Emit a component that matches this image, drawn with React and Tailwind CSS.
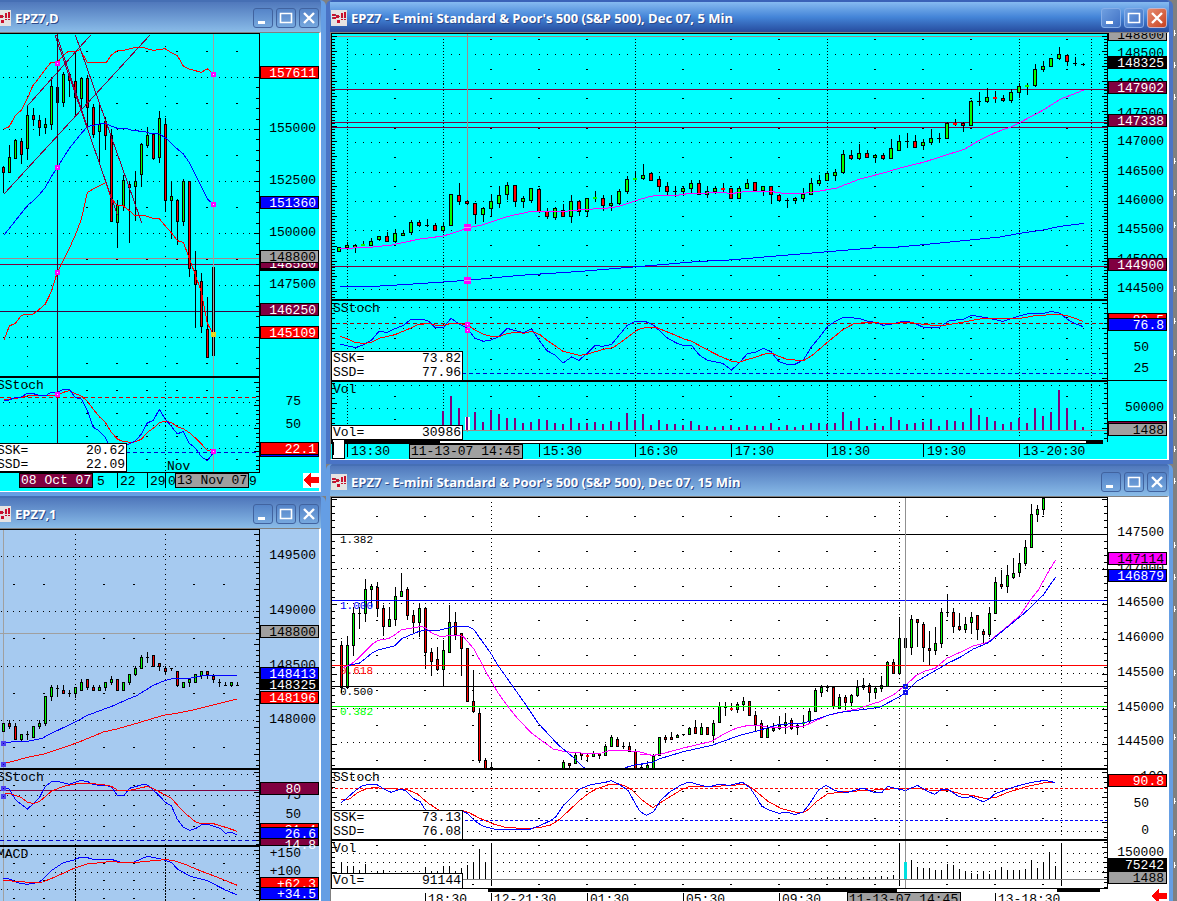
import React from "react";
import clsx from "clsx";

const MONO = "font-['Liberation_Mono',monospace]";

// price bars: "high top bottom low kind", in thirds of a pixel below the series origin
// g = up, r = down, k = doji, G / R = flat tick, x = bar under the cursor
const DAILY_BARS = `500 503 517 580 r,437 471 517 520 g,417 420 475 475 g,415 423 463 494 r,318 346 445 482 g,324 346 358 380 r,
346 361 383 410 r,356 373 383 402 g,238 258 374 388 g,238 262 307 310 x,216 222 307 322 g,222 224 242 292 r,156 244 293 348 r,
232 235 296 330 g,226 235 322 380 r,312 321 403 415 r,316 373 394 486 g,352 363 406 452 r,388 405 665 668 r,600 617 667 745 g,
527 541 617 635 g,545 552 562 731 r,513 544 560 665 g,430 434 524 563 g,381 406 436 445 g,402 404 475 482 r,333 355 472 490 g,
355 373 602 637 r,544 589 602 718 g,598 601 664 737 r,538 544 664 678 g,544 544 805 833 r,755 811 853 985 r,820 845 979 1000 r,
892 988 1072 1075 r,802 802 1066 1067 x`;

const ONE_MIN_BARS = `684 686 710 712 g,676 686 695 702 r,684 693 734 734 r,717 717 734 742 g,708 717 719 735 k,693 693 728 728 g,
676 684 695 703 g,603 603 686 695 g,570 577 604 620 g,570 579 581 606 k,572 587 596 597 r,585 594 596 606 k,577 577 596 609 g,
552 562 586 588 g,552 553 578 587 r,570 577 587 588 r,570 577 587 588 g,562 562 577 588 g,545 553 563 570 g,552 553 587 588 r,
562 562 587 588 g,538 538 563 571 g,513 520 539 545 g,480 487 521 521 g,472 487 489 505 k,480 481 514 514 r,504 505 514 530 r,
513 520 530 540 r,520 520 522 530 k,529 529 572 578 r,562 562 577 579 g,551 553 562 578 g,538 538 562 562 g,529 530 540 553 g,
529 529 538 554 r,538 544 553 564 r,553 561 563 578 k,562 570 572 572 k,562 562 572 578 g,562 570 572 572 k`;

const FIVE_MIN_BARS = `742 742 754 757 g,728 736 741 745 g,732 736 743 761 g,725 732 736 736 G,716 724 735 740 g,708 709 718 724 g,
698 710 725 725 r,687 699 725 730 g,691 700 707 708 g,660 667 698 707 g,660 667 677 682 r,657 675 677 681 k,670 676 692 693 r,
667 679 691 700 g,582 582 677 680 g,549 586 604 615 r,600 604 611 615 r,609 610 643 672 r,622 626 643 668 g,582 604 626 650 g,
558 586 610 624 g,546 556 584 601 g,555 556 604 623 r,589 595 604 626 g,564 565 601 611 g,564 568 634 640 r,625 633 649 658 r,
622 626 653 662 g,613 631 649 652 r,585 604 649 671 g,600 604 633 649 r,594 595 635 650 g,575 592 596 605 G,585 595 616 634 r,
585 610 616 634 g,567 574 610 616 g,529 538 575 584 g,516 535 539 548 G,492 525 536 540 g,516 520 540 543 r,529 538 560 578 r,
546 559 575 586 r,558 573 575 593 k,558 565 575 588 g,540 549 566 580 g,541 550 583 584 r,558 574 584 594 g,558 565 575 584 g,
549 565 569 578 R,564 565 596 597 r,558 565 594 596 g,537 549 566 567 g,546 547 570 575 r,558 559 570 588 g,558 559 584 612 r,
582 586 602 606 r,594 600 602 624 k,591 595 602 614 g,564 583 596 606 g,534 550 584 587 g,525 541 551 560 g,516 520 542 543 g,
507 516 527 543 g,450 462 518 522 g,450 466 475 482 r,432 460 475 480 g,450 460 473 475 r,462 466 473 491 g,460 466 475 482 r,
417 445 475 477 g,405 424 452 455 g,400 424 425 445 k,405 424 442 446 r,418 427 437 452 g,387 414 428 435 g,399 414 416 428 k,
367 370 416 418 g,357 369 373 380 R,367 370 377 398 r,300 304 377 379 g,277 303 305 318 k,264 292 305 311 g,273 292 297 311 R,
285 294 302 306 r,268 277 302 311 g,252 259 278 294 g,249 257 261 287 G,192 208 257 262 g,184 199 209 218 g,174 175 200 203 g,
141 163 176 182 g,163 166 185 200 r,172 189 191 199 k,190 193 195 200 k`;

const FIFTEEN_MIN_A = `529 541 667 685 r,513 541 666 672 g,426 444 542 573 g,426 444 446 494 k,342 373 445 473 g,357 364 374 428 g,
351 367 430 458 r,420 430 485 515 r,426 463 485 488 g,366 394 463 485 g,324 379 394 396 g,366 373 451 467 r,435 451 472 508 r,
415 430 472 516 g,427 430 562 612 r,549 562 590 635 r,546 583 612 620 r,525 556 613 664 g,420 472 562 564 g,441 472 509 527 r,
504 506 550 635 r,549 550 709 712 r,617 709 740 745 r,730 745 886 895 r,879 885 909 910 r,894 908 909 910 k`;
const FIFTEEN_MIN_B = `885 892 909 910 g,894 895 901 910 r,864 871 894 895 g,864 866 872 887 r,864 870 876 893 R,858 866 874 875 g,
864 866 872 882 r,837 844 872 873 g,810 817 844 848 g,816 823 844 846 r,831 843 845 852 k,831 844 858 861 r,852 858 909 910 r,
895 908 909 910 k,890 900 909 910 g,869 873 909 910 g`;
const FIFTEEN_MIN_C = `441 442 496 497 g,435 442 448 458 r,426 441 449 450 r,432 436 443 444 g,433 433 435 438 k,411 415 433 437 g,
390 411 429 434 r,400 411 433 434 g,411 412 434 435 r,390 400 437 461 g,336 349 397 398 g,336 352 355 380 k,340 354 359 365 R,
336 343 359 371 g,321 334 344 365 g,334 335 376 378 r,364 376 402 423 r,390 400 443 444 r,405 415 443 445 g,400 415 422 428 g,
378 406 416 422 g,369 397 406 434 g,384 391 416 422 r,400 405 413 437 g,375 396 401 416 G,354 364 394 402 g,294 301 364 366 g,
285 292 307 323 g,285 291 293 307 k,290 291 349 359 r,312 322 355 357 g,315 322 337 360 r,312 316 337 349 g,270 292 317 322 g,
264 287 292 302 r,280 286 307 338 r,291 295 307 329 g,259 286 296 308 g,213 217 288 290 g,208 217 250 251 r,82 145 250 253 g,
145 146 173 222 x`;
const FIFTEEN_MIN_D = `376 388 473 497 g,388 388 397 473 r,397 403 473 516 r,423 476 482 525 r,412 460 482 497 g,354 367 461 476 g,
312 366 368 383 k,354 367 409 431 r,370 409 418 425 r,382 403 418 431 g,367 382 398 434 g,376 376 418 452 r,418 424 433 467 r,
351 370 434 442 g,262 277 370 371 g,241 282 289 299 r,225 256 289 311 g,204 250 262 269 g,189 219 247 263 g,151 172 220 228 g,
42 73 172 174 g,45 58 73 96 g,24 24 58 75 g`;

const FIVE_MIN_VOL = [
  61, 106, 70, 42, 58, 27, 64, 52, 40, 40, 25, 28, 37, 34, 25, 22, 40, 25, 25, 28, 22, 31, 28, 55, 34, 52, 19, 34, 22, 22, 19, 31, 19, 16,
  13, 14, 17, 11, 17, 14, 14, 25, 11, 17, 11, 17, 23, 23, 21, 23, 56, 29, 38, 14, 23, 14, 41, 32, 20, 25, 26, 35, 14, 32, 29, 26, 68, 47,
  41, 29, 20, 26, 38, 23, 68, 44, 56, 122, 68, 32, 11,
];
const FIFTEEN_VOL_A = [52, 38, 40, 26, 46, 15, 25, 28, 8, 8, 8, 8, 8, 8, 35, 25, 22, 38, 38, 25, 33, 43, 50, 90, 48];
const FIFTEEN_VOL_B = [
  3, 4, 3, 5, 3, 5, 5, 3, 4, 6, 5, 6, 8, 6, 12, 10, 52, 58, 35, 34, 33, 28, 28, 44, 41, 30, 24, 17, 14, 22, 14, 26, 36, 28, 28, 28, 30, 58,
  34, 52, 82, 40,
];

const third = (v) => Math.round(v / 3);
const FILL = { g: "#00ff00", r: "#ff0000", G: "#00ff00", R: "#ff0000", x: "#808080" };

function Candles({ x, y = 0, step = 6, wide, rows }) {
  const w = wide ? 4 : 3;
  return rows.split(",").map((row, i) => {
    const [h, t, b, l, kind] = row.trim().split(" ");
    const [hi, top, bot, lo] = [h, t, b, l].map((v) => y + Math.floor(v / 3));
    const cx = x + i * step;
    const left = cx - (wide ? 2 : 1);
    const flat = kind === "G" || kind === "R";
    return (
      <g key={i}>
        <rect x={cx} y={hi} width="1" height={Math.max(1, lo - hi)} fill="#000" />
        {kind === "k" && <rect x={left} y={top} width={w} height="1" fill="#000" />}
        {flat && <rect x={left} y={top} width={w} height="2" fill={FILL[kind]} />}
        {kind !== "k" && !flat && (
          <>
            <rect x={left} y={top} width={w} height={Math.max(2, bot - top + 1)} fill="#000" />
            <rect x={left + 1} y={top + 1} width={w - 2} height={Math.max(1, bot - top - 1)} fill={FILL[kind]} />
          </>
        )}
      </g>
    );
  });
}

// polyline whose points are given in thirds of a pixel from (x, y)
function Curve({ x = 0, y = 0, sx = 3, color, w = 1, pts }) {
  const points = pts
    .split(" ")
    .map((p) => p.split(","))
    .map(([px, py]) => `${x + px / sx},${y + py / 3}`)
    .join(" ");
  return <polyline points={points} fill="none" stroke={color} strokeWidth={w} />;
}

const H = ({ y, x = 0, to = 4000, color = "#000", w = 1, dash }) => (
  <line x1={x} x2={to} y1={y + w / 2} y2={y + w / 2} stroke={color} strokeWidth={w} strokeDasharray={dash} />
);
const V = ({ x, y, to, color = "#000", w = 1, dash }) => (
  <line x1={x + w / 2} x2={x + w / 2} y1={y} y2={to} stroke={color} strokeWidth={w} strokeDasharray={dash} />
);

const DotRows = ({ ys, x, gap }) => ys.map((y) => <H key={y} y={y} x={x} dash={`1 ${gap - 1}`} />);
const Dashes = ({ xs, ys }) => ys.flatMap((y) => xs.map((x) => <rect key={`${x}-${y}`} x={x - 1} y={y} width="2" height="1" />));

function Handle({ x, y, color = "#ff00ff", dot = "#fff", size = 5 }) {
  const r = (size - 1) / 2;
  return (
    <>
      <rect x={x - r} y={y - r} width={size} height={size} fill={color} />
      {size > 5 ? <rect x={x - r} y={y} width={size} height="1" fill="#d8a0e8" /> : <rect x={x} y={y} width="1" height="1" fill={dot} />}
    </>
  );
}

function Ticks({ x, from, to, step, dir = -1, major = 5 }) {
  const out = [];
  for (let y = from, i = 0; y < to; y += step, i++) {
    const len = i % major === 0 ? 5 : 3;
    out.push(<rect key={i} x={dir < 0 ? x - len : x} y={Math.round(y)} width={len} height="1" />);
  }
  return out;
}

const T = ({ x, y, children, fill = "#000", end, small }) => (
  <text
    x={x}
    y={y}
    fill={fill}
    textAnchor={end ? "end" : "start"}
    className={clsx(MONO, small ? "text-[11px]" : "text-[13px]", "whitespace-pre")}
  >
    {children}
  </text>
);

const TAG = {
  red: ["#ff0000", "#fff"],
  blue: ["#0000ff", "#fff"],
  plum: ["#800040", "#fff"],
  gray: ["#a0a0a0", "#000"],
  black: ["#000", "#fff"],
  pink: ["#ff00ff", "#000"],
};

// axis entries: [text, baseline] or [text, top, tag colour, height]
function AxisLabels({ x, items }) {
  return items.map(([text, y, tag, h = 13, inset = 3]) =>
    tag ? (
      <g key={`${text}${y}`}>
        <rect x={x + 0.5} y={y + 0.5} width="58" height={h - 1} fill={TAG[tag][0]} stroke="#000" />
        {text && (
          <T x={x + 59 - inset} y={y + 11} fill={TAG[tag][1]} end>
            {text}
          </T>
        )}
      </g>
    ) : (
      <T key={`${text}${y}`} x={x + 59 - (text.length < 3 || text[0] === "+" ? 18 : 3)} y={y} end>
        {text}
      </T>
    )
  );
}

function TimeTag({ x, y, w, tag, children }) {
  return (
    <>
      <rect x={x + 0.5} y={y + 0.5} width={w - 1} height="14" fill={TAG[tag][0]} stroke="#000" />
      <T x={x + 2} y={y + 11} fill={TAG[tag][1]}>
        {children}
      </T>
    </>
  );
}

const RedArrow = ({ x, y }) => (
  <>
    <rect x={x} y={y} width="16" height="15" fill="#fff" />
    <path d={`M${x} ${y + 7}l8-7v4h8v6h-8v4z`} fill="#ff0000" />
  </>
);

function AppIcon({ className }) {
  return (
    <svg viewBox="0 0 16 16" className={clsx("size-4 shrink-0", className)} shapeRendering="crispEdges">
      <rect width="16" height="16" fill="#e6e3e2" />
      <path d="M1 4h3v2H1zM2 7h3v2H2zM5 5h3v3H5zM10 3h2v5h-2zM13 2h2v6h-2zM10 9h2v1h-2zM13 9h2v1h-2zM6 10h3v3H6z" fill="#c8102e" />
      <path d="M4 4h1v2H4zM1 7h1v2H1zM8 6h1v1H8z" fill="#7a5258" />
    </svg>
  );
}

function CaptionButton({ kind, active }) {
  return (
    <button
      aria-label={kind}
      className={clsx(
        "size-5 rounded-[3px] border",
        kind === "Close" && active
          ? "border-[#c9b2c4] bg-linear-to-br from-[#e58c70] to-[#c9401c]"
          : active
            ? "border-[#86aee8] bg-linear-to-br from-[#6f9fe0] to-[#3f70c4]"
            : "border-[#41639f] bg-linear-to-b from-[#5584c8] to-[#76a8de]"
      )}
    >
      <svg viewBox="0 0 18 18" className="size-full" fill="none" stroke="#fff">
        {kind === "Minimize" && <path d="M4 13.5h7" strokeWidth="3" />}
        {kind === "Maximize" && <path d="M3.5 4.5h11v9h-11zM3 4.5h12" strokeWidth="1.6" />}
        {kind === "Close" && <path d="M4 4l10 10M14 4L4 14" strokeWidth="2.4" />}
      </svg>
    </button>
  );
}

function ChartWindow({ title, active, cut, bg, children }) {
  return (
    <section
      className={clsx(
        "shrink-0 rounded-tr-md border-r-[4px] border-b-[4px] pt-[2px]",
        cut ? "border-r-[5px]" : "rounded-tl-md border-l-[4px]",
        active ? "border-[#4a74c6] bg-[#3a62b8]" : "border-[#659ee4] bg-[#466fb4]"
      )}
    >
      <header
        className={clsx(
          "flex h-[30px] items-center gap-1 pt-[2px] pr-[2px]",
          !cut && "pl-px",
          active
            ? "bg-linear-to-b from-[#86baf0] via-[#4485d8] to-[#274c9e]"
            : "bg-linear-to-b from-[#5078bc] to-[#8abce8]"
        )}
      >
        <AppIcon className={cut && "-ml-[5px]"} />
        <h2 className="grow truncate font-['Open_Sans',sans-serif] text-[13px] leading-4 font-bold text-white [text-shadow:1px_1px_0_#2c4a8a]">
          {title}
        </h2>
        <div className="flex gap-[3px]">
          <CaptionButton kind="Minimize" active={active} />
          <CaptionButton kind="Maximize" active={active} />
          <CaptionButton kind="Close" active={active} />
        </div>
      </header>
      <div className={clsx("flex border-t border-r-2 border-b border-t-[#808080] border-r-white border-b-white", !cut && "border-l border-l-[#808080]", bg)}>
        {children}
      </div>
    </section>
  );
}

// both drawings of a window share one coordinate system that starts at (x, y)
function Plot({ x, y, height, overlay, children }) {
  return (
    <div className="relative min-w-0 grow">
      <svg className={clsx("block w-full", height)} shapeRendering="crispEdges">
        <g transform={`translate(${-x} ${-y})`}>{children}</g>
      </svg>
      {overlay}
    </div>
  );
}
function Axis({ x, y, height, children }) {
  return (
    <svg className={clsx("block w-[59px] shrink-0 overflow-visible [clip-path:inset(0_0_0_-8px)]", height)} shapeRendering="crispEdges">
      <g transform={`translate(${-x} ${-y})`}>{children}</g>
    </svg>
  );
}

function Readout({ rows, className, cut }) {
  return (
    <dl className={clsx("absolute left-0 border border-black bg-white text-[13px] leading-[14px] text-black", MONO, cut ? "w-[127px] border-l-0" : "w-[132px]", className)}>
      {rows.map(([name, value]) => (
        <div key={name} className="flex justify-between overflow-hidden pr-px pl-px">
          <dt className={cut ? "-ml-1" : ""}>{name}</dt>
          <dd>{value}</dd>
        </div>
      ))}
    </dl>
  );
}

function DailyChart() {
  const box = { y: 33, height: "h-[458px]" };
  const marks = [87, 117, 147, 177, 207, 237];
  return (
    <ChartWindow title="EPZ7,D" cut bg="bg-[#00ffff]">
      <Plot x={0} {...box} overlay={<Readout cut className="top-[410px] h-[29px]" rows={[["SSK=", "20.62"], ["SSD=", "22.09"]]} />}>
        <DotRows ys={[77, 129, 181, 233, 285, 337, 402, 425, 448]} x={3} gap={6} />
        <Dashes xs={marks} ys={[51, 103, 155, 207, 259, 311, 363, 390, 413, 436, 459]} />
        <V x={27} y={46} to={440} dash="1 9" />
        <V x={165} y={46} to={376} dash="1 9" />
        <V x={165} y={382} to={472} dash="1 3" />
        <H y={258} color="#a08a8a" />
        <H y={264} color="#800040" />
        <H y={311} color="#400040" />
        <Candles x={3} rows={DAILY_BARS} />
        <Curve color="#f00" pts="12,386 28,380 46,346 64,331 82,296 98,258 116,235 134,211 152,188 172,187 190,166 205,154 226,155 240,148 262,187 280,189 298,187 318,189 334,165 352,152 370,151 400,144 430,143 460,151 495,146 514,158 532,167 550,198 568,207 604,217 622,206 640,223" />
        <Curve color="#00f" pts="12,705 28,685 82,617 100,602 118,584 136,562 154,530 172,502 208,445 244,400 262,380 300,372 316,370 334,378 352,385 376,385 400,392 430,394 450,400 478,402 496,413 532,447 550,462 568,488 586,524 604,560 622,597 640,613" />
        <Curve color="#f00" pts="12,1020 28,978 46,970 64,946 82,943 100,942 118,928 136,912 154,875 172,817 190,782 208,745 226,705 244,658 262,577 280,567 300,557 318,548 334,595 352,617 370,618 388,632 406,648 430,645 460,655 478,656 496,678 514,698 532,722 550,727 568,775 604,875 622,970 640,1003" />
        <Curve color="#800040" pts="82,318 272,105" />
        <Curve color="#800040" pts="12,582 450,105" />
        <Curve color="#800040" pts="226,105 425,668" />
        <Curve color="#800040" pts="165,105 352,645" />
        <Curve color="#800040" pts="170,105 262,380" />
        <V x={57} y={34} to={472} color="#400020" />
        <V x={213} y={34} to={472} color="#a0a0a0" />
        <Handle x={57} y={63} />
        <Handle x={57} y={167} />
        <Handle x={57} y={272} />
        <Handle x={213} y={74} />
        <Handle x={213} y={204} />
        <Handle x={213} y={334} color="#e8d020" dot="#ff0" />

        <H y={397} color="#c00" dash="4 3" />
        <H y={452} color="#00c" dash="4 3" />
        <Curve y={240} color="#f00" pts="12,478 46,476 82,468 100,466 172,465 190,457 208,452 226,461 244,468 262,484 280,508 298,530 316,547 334,577 352,597 370,605 400,607 424,598 442,577 460,565 478,548 496,544 514,547 532,560 550,566 568,578 586,594 604,612 622,631 640,629" />
        <Curve y={240} color="#00f" pts="12,481 28,480 46,472 64,471 82,460 100,461 118,466 136,468 154,456 172,458 190,448 208,448 226,473 244,477 262,512 280,562 298,573 316,592 325,612 352,630 388,612 406,603 424,582 442,549 460,541 478,508 496,538 514,559 532,582 550,574 568,610 586,624 604,650 622,662 640,638" />
        <Handle x={57} y={394} />
        <Handle x={213} y={451} />
        <T x={-3} y={389}>SStoch</T>
        <T x={167} y={470}>Nov</T>
        <H y={33} />
        <H y={376} w={2} />
        <H y={472} />

        <T x={97} y={485}>5</T>
        <V x={117} y={473} to={488} />
        <T x={120} y={485}>22</T>
        <V x={147} y={473} to={488} />
        <T x={150} y={485}>29</T>
        <V x={165} y={473} to={488} />
        <T x={168} y={485}>0</T>
        <T x={249} y={485}>9</T>
        <TimeTag x={19} y={473} w={74} tag="plum">08 Oct 07</TimeTag>
        <TimeTag x={175} y={473} w={74} tag="gray">13 Nov 07</TimeTag>
      </Plot>
      <Axis x={260} {...box}>
        <V x={259} y={33} to={473} />
        <Ticks x={259} from={77} to={375} step={10.4} />
        <Ticks x={259} from={382} to={470} step={4.6} />
        <AxisLabels
          x={260}
          items={[
            ["157611", 66, "red"], ["155000", 132], ["152500", 184], ["151360", 196, "blue"], ["150000", 236],
            ["", 258, "black"], ["148580", 257, "plum", 12], ["148800", 250, "gray"], ["147500", 288],
            ["146250", 303, "plum"], ["145109", 326, "red"], ["75", 405], ["50", 428], ["", 444, "blue"], ["22.1", 442, "red"],
          ]}
        />
        <RedArrow x={303} y={473} />
      </Axis>
    </ChartWindow>
  );
}

function OneMinuteChart() {
  const box = { y: 529, height: "h-[400px]" };
  const marks = [14, 44, 104, 134, 194, 224];
  return (
    <ChartWindow title="EPZ7,1" cut bg="bg-[#a6caf0]">
      <Plot x={0} {...box}>
        <DotRows ys={[556, 611, 666, 720, 774, 795, 815, 836, 854, 872, 889]} x={1} gap={6} />
        <Dashes xs={marks} ys={[584, 638, 693, 747, 785, 805, 826, 863, 880, 898]} />
        {[75, 165].map((x) => (
          <React.Fragment key={x}>
            <V x={x} y={534} to={845} dash="1 4" />
            <V x={x} y={848} to={929} dash="2 1" />
          </React.Fragment>
        ))}
        <H y={633} color="#a0a0a0" />
        <V x={3} y={530} to={929} color="#a0a0a0" />
        <Candles x={3} y={495} rows={ONE_MIN_BARS} />
        <Curve y={495} color="#00f" pts="10,744 50,739 82,739 128,730 140,722 190,698 226,681 262,661 300,647 340,632 380,614 410,602 460,571 496,556 514,552 532,551 568,550 604,543 640,541 712,541" />
        <Curve y={495} color="#f00" pts="10,806 46,797 82,787 136,776 190,758 240,740 310,711 350,702 400,688 490,661 530,655 580,645 640,630 712,612" />
        <H y={790} color="#800040" />
        <H y={840} color="#00c" dash="4 3" />
        <Curve y={495} color="#00f" pts="10,878 28,882 46,914 82,942 100,926 118,908 136,874 154,861 172,859 208,868 226,862 240,857 262,859 280,869 334,874 352,902 372,902 388,880 430,868 442,870 478,902 496,922 514,932 532,973 550,997 570,1006 586,1001 604,990 622,988 640,993 660,1000 676,1015 694,1011 712,1021" />
        <Curve y={495} color="#f00" pts="10,898 28,895 46,901 64,908 82,921 100,926 118,920 154,889 190,874 226,867 262,864 316,870 334,874 352,885 372,888 400,884 442,874 460,881 514,910 550,950 586,980 604,986 640,986 680,998 712,1009" />
        <Curve y={495} color="#00f" pts="10,1150 28,1152 52,1163 80,1168 118,1162 154,1127 190,1103 220,1096 240,1087 262,1088 280,1093 334,1093 370,1104 400,1102 442,1084 480,1091 514,1102 532,1122 568,1142 586,1148 622,1157 676,1185 712,1200" />
        <Curve y={495} color="#f00" pts="10,1157 60,1159 82,1162 128,1161 160,1148 220,1121 262,1107 300,1103 334,1099 370,1103 410,1102 460,1097 496,1094 520,1096 560,1110 600,1127 640,1142 670,1154 712,1171" />
        {[743, 764, 788, 796].map((y) => (
          <Handle key={y} x={3} y={y} color="#5040f0" dot="#00a" />
        ))}
        <T x={-3} y={781}>SStoch</T>
        <T x={-3} y={858}>MACD</T>
        <H y={529} />
        <H y={768} w={2} />
        <H y={845} w={2} />
      </Plot>
      <Axis x={260} {...box}>
        <V x={259} y={529} to={929} />
        <Ticks x={259} from={534} to={768} step={5.5} />
        <Ticks x={259} from={772} to={845} step={4} />
        <Ticks x={259} from={850} to={929} step={4} />
        <AxisLabels
          x={260}
          items={[
            ["149500", 559], ["149000", 614], ["148800", 625, "gray"], ["148500", 669], ["148325", 678, "black", 12],
            ["148413", 667, "blue"], ["148196", 691, "red"], ["148000", 723], ["75", 799], ["80", 782, "plum", 13, 18],
            ["50", 818], ["31.4", 823, "red"], ["26.6", 827, "blue"], ["14.8", 838, "plum", 8], ["+150", 857], ["+100", 875],
            ["+62.3", 877, "red"], ["+34.5", 887, "blue"],
          ]}
        />
      </Axis>
    </ChartWindow>
  );
}

function FiveMinuteChart() {
  const box = { y: 33, height: "h-[426px]" };
  const marks = [395, 491, 539, 587, 683, 731, 779, 875, 923, 971, 1067];
  const hours = [["13:30", 347], ["15:30", 539], ["16:30", 635], ["17:30", 731], ["18:30", 827], ["19:30", 923], ["13-20:30", 1019]];
  return (
    <ChartWindow title="EPZ7 - E-mini Standard &amp; Poor's 500 (S&amp;P 500), Dec 07, 5 Min" active bg="bg-[#00ffff]">
      <Plot
        x={331}
        {...box}
        overlay={
          <>
            <Readout className="top-[318px] h-[30px]" rows={[["SSK=", "73.82"], ["SSD=", "77.96"]]} />
            <Readout className="top-[392px] h-[15px]" rows={[["Vol=", "30986"]]} />
          </>
        }
      >
        <DotRows ys={[54, 83, 113, 142, 172, 201, 230, 260, 289, 307, 328, 348, 369, 385, 408]} x={355} gap={8} />
        <Dashes xs={marks} ys={[39, 69, 98, 128, 157, 186, 216, 245, 275, 317, 338, 359, 396, 419]} />
        {[347, 443, 635, 827, 1019, 1091].map((x) => (
          <V key={x} x={x} y={36} to={438} dash="1 2" />
        ))}
        <H y={36} color="#a08a8a" />
        {[89, 122, 127, 266].map((y) => (
          <H key={y} y={y} color="#800040" />
        ))}
        <V x={467} y={34} to={432} color="#a08a8a" />
        <Candles x={339} step={8} wide rows={FIVE_MIN_BARS} />
        <Curve color="#f0f" pts="1021,745 1100,743 1175,735 1260,717 1330,708 1375,694 1402,684 1445,675 1473,666 1525,649 1585,636 1615,634 1695,634 1735,630 1825,624 1857,619 1905,603 1950,589 1980,586 2030,586 2070,580 2110,580 2145,577 2200,580 2240,574 2310,574 2350,580 2410,580 2460,573 2510,564 2580,537 2650,519 2700,504 2740,494 2770,487 2820,471 2895,447 2940,420 2990,396 3030,382 3070,362 3130,330 3180,298 3252,270" />
        <Curve color="#00f" pts="1021,859 1125,859 1240,852 1402,841 1560,826 1730,815 1900,801 2100,784 2175,781 2400,762 2640,742 2685,742 2760,735 2880,723 3000,711 3060,700 3130,690 3180,679 3252,670" />
        <Handle x={467} y={227} size={7} />
        <Handle x={467} y={280} size={7} />

        <H y={323} color="#a00000" dash="4 3" />
        <H y={373} color="#00c" dash="4 3" />
        <Curve x={325} y={230} color="#00f" pts="46,343 70,348 92,353 112,346 140,330 162,304 186,307 210,296 234,287 258,268 295,268 312,274 330,292 356,292 378,265 402,282 427,295 450,325 475,334 498,330 522,320 546,295 575,303 595,308 620,297 642,330 666,362 690,375 714,399 740,381 762,391 786,370 810,346 834,349 860,343 882,316 906,287 930,274 960,274 985,285 1026,323 1052,338 1075,347 1100,347 1124,376 1148,391 1193,400" />
        <Curve x={720} y={280} color="#00f" pts="8,250 34,270 57,250 82,221 106,217 130,205 153,215 177,245 201,253 225,253 250,240 274,201 298,172 322,140 346,124 370,112 418,115 440,123 470,128 490,136 515,132 540,126 560,124 585,130 610,142 655,144 688,122 730,118 755,106 800,113 848,124 890,110 920,102 970,100 994,94 1020,100 1045,120 1066,131 1090,140" />
        <Curve x={325} y={230} color="#f00" pts="46,319 70,328 92,338 120,340 140,336 162,325 210,314 234,304 258,294 280,283 312,281 330,285 356,286 378,280 402,280 427,285 450,300 475,313 498,319 522,320 546,311 575,306 595,310 620,304 645,314 666,331 690,347 714,364 762,376 786,373 834,358 865,353 906,323 940,298 965,292 995,293 1040,311 1075,326 1100,334 1150,361 1185,379" />
        <Curve x={720} y={280} color="#f00" pts="0,229 34,243 57,247 82,238 106,232 130,223 153,219 177,229 201,238 250,242 274,228 298,208 322,187 370,148 400,132 440,127 515,131 560,126 610,133 660,138 720,128 790,115 890,117 940,108 1015,102 1045,108 1066,115 1090,125" />
        <Handle x={467} y={324} />
        <Handle x={467} y={330} />
        <T x={333} y={312}>SStoch</T>

        <rect x="465" y="417" width="5" height="14" fill="#fff" />
        {FIVE_MIN_VOL.map((v, i) => (
          <rect key={i} x={442 + i * 8} y={431 - third(v)} width="2" height={third(v)} fill="#800080" />
        ))}
        <H y={430} color="#a08a8a" />
        <T x={333} y={393}>Vol</T>
        <H y={33} />
        <H y={299} w={2} />
        <H y={380} w={2} />
        <V x={331} y={33} to={440} />
        <Ticks x={332} dir={1} from={36} to={299} step={3} major={5} />
        <Ticks x={332} dir={1} from={303} to={440} step={5} />

        <H y={440} w={4} to={1103} />
        <H y={441} w={2} x={440} to={1086} color="#fff" />
        {hours.map(([label, x]) => (
          <React.Fragment key={label}>
            <V x={x} y={444} to={457} />
            <T x={x + 4} y={455}>{label}</T>
          </React.Fragment>
        ))}
        <TimeTag x={409} y={444} w={114} tag="gray">11-13-07 14:45</TimeTag>
        <rect x="332.5" y="438.5" width="12" height="20" fill="#fff" stroke="#000" />
        <V x={333} y={442} to={455} />
      </Plot>
      <Axis x={1108} {...box}>
        <V x={1107} y={33} to={442} />
        <Ticks x={1107} from={36} to={299} step={3} major={5} />
        <Ticks x={1107} from={303} to={440} step={5} />
        <AxisLabels
          x={1108}
          items={[
            ["148800", 28, "gray"], ["148500", 57], ["148325", 56, "black"], ["148000", 87], ["147500", 117], ["147902", 81, "plum"],
            ["147338", 114, "plum"], ["147000", 145], ["146500", 175], ["146000", 204], ["145500", 233], ["145000", 263],
            ["144900", 258, "plum"], ["144500", 292], ["80.5", 313, "red"], ["76.8", 318, "blue"], ["50", 351], ["25", 372],
            ["50000", 411], ["", 421, "plum"], ["1488", 423, "gray"],
          ]}
        />
        <H y={380} x={1108} />
      </Axis>
    </ChartWindow>
  );
}

function FifteenMinuteChart() {
  const box = { y: 497, height: "h-[426px]" };
  const marks = [377, 425, 473, 539, 587, 635, 683, 731, 779, 827, 875, 947, 995, 1043];
  const hours = [["18:30", 425], ["12-21:30", 491], ["01:30", 587], ["05:30", 683], ["09:30", 779], ["13-18:30", 995]];
  const fibs = [["1.382", 534, "#000"], ["1.000", 600, "#00f"], ["0.618", 665, "#f00"], ["0.500", 686, "#000"], ["0.382", 706, "#0f0"]];
  return (
    <ChartWindow title="EPZ7 - E-mini Standard &amp; Poor's 500 (S&amp;P 500), Dec 07, 15 Min" bg="bg-white">
      <Plot
        x={331}
        {...box}
        overlay={
          <>
            <Readout className="top-[313px] h-[30px]" rows={[["SSK=", "73.13"], ["SSD=", "76.08"]]} />
            <Readout className="top-[376px] h-[16px]" rows={[["Vol=", "91144"]]} />
          </>
        }
      >
        <DotRows ys={[534, 568, 603, 638, 673, 708, 742, 777, 804, 831, 853, 862, 871]} x={341} gap={6} />
        <Dashes xs={marks} ys={[516, 551, 586, 620, 655, 690, 725, 760, 791, 818, 845, 884]} />
        {[491, 899, 1061].map((x) => (
          <React.Fragment key={x}>
            <V x={x} y={502} to={838} dash="1 3" />
            <V x={x} y={843} to={886} />
          </React.Fragment>
        ))}
        <Candles x={341} y={465} rows={FIFTEEN_MIN_A} />
        <Candles x={563} y={465} rows={FIFTEEN_MIN_B} />
        <Candles x={659} y={590} rows={FIFTEEN_MIN_C} />
        <Candles x={911} y={490} rows={FIFTEEN_MIN_D} />
        {fibs.map(([label, y, color]) => (
          <React.Fragment key={label}>
            <H y={y} color={color} />
            <T x={340} y={y + 9} fill={color} small>{label}</T>
          </React.Fragment>
        ))}
        <Curve x={325} y={465} color="#f0f" pts="55,607 72,601 86,592 104,576 140,539 158,526 190,521 210,509 230,494 260,489 290,484 302,489 320,504 345,514 400,511 415,515 446,551 464,584 482,619 500,650 518,682 540,713 572,754 618,803 660,834 685,852 720,860 790,866 830,864 850,858 900,856 945,861 985,872" />
        <Curve x={325} y={465} color="#00f" pts="72,601 104,594 122,580 140,565 158,555 208,543 230,521 280,500 300,495 340,496 385,485 430,485 446,493 464,518 500,569 518,600 560,659 605,723 640,775 700,840 740,873 778,909" />
        <Curve x={325} y={465} color="#00f" pts="900,908 930,900 985,891" />
        <Curve x={640} y={590} color="#f0f" pts="0,492 40,496 60,493 130,474 215,454 255,430 290,414 330,405 352,405 385,412 400,413 490,409 530,391 560,377 610,365 650,357 680,347 716,336 760,315 796,285" />
        <Curve x={640} y={590} color="#00f" pts="0,524 40,516 60,506 130,485 215,466 300,436 350,423 415,404 490,399 510,394 560,377 600,367 650,361 718,352 760,330 796,310" />
        <Curve x={880} y={490} color="#f0f" pts="76,587 110,555 135,543 165,535 200,505 240,487 280,468 325,456 380,411 420,376 455,325 475,300 510,237 527,210" />
        <Curve x={880} y={490} color="#00f" pts="76,608 110,574 160,545 205,519 240,502 280,477 325,458 380,413 435,368 490,315 510,285 527,262" />

        <H y={788} color="#f00" dash="3 2" />
        <H y={820} color="#00f" dash="3 2" />
        <Curve x={325} y={760} sx={1.84} color="#f00" pts="30,118 45,117 60,98 75,87 90,82 110,86 150,88 170,102 190,130 212,153 250,150 265,158 285,175 310,192 330,201 365,206 395,203 415,195 430,180 450,150 468,122 485,100 500,86 520,75 535,72 550,76 565,90 585,122 603,143 625,120 655,90 670,80 720,79 775,73 790,90 815,124 840,146 870,158 880,158 890,148 905,124 925,101 960,95 1040,87 1090,85 1110,90 1150,92 1170,102 1190,106 1215,116 1235,112 1255,98 1290,80 1325,68 1344,68" />
        <Curve x={325} y={760} sx={1.84} color="#00f" pts="30,128 42,112 55,93 68,78 80,73 95,73 108,87 122,97 140,87 150,94 162,115 175,125 185,150 245,150 262,160 275,182 290,198 310,207 330,209 375,209 395,197 415,182 425,170 438,138 450,118 468,88 485,76 500,71 518,66 527,62 540,72 558,92 570,128 580,155 592,166 605,155 617,122 635,95 655,75 670,66 685,73 706,81 725,73 745,76 768,67 782,83 795,115 803,138 820,152 835,160 850,156 865,164 880,156 892,130 908,90 922,76 938,92 960,98 990,84 1010,97 1025,97 1035,79 1068,92 1090,76 1110,95 1122,103 1135,87 1145,87 1165,108 1175,113 1190,110 1212,126 1225,113 1233,101 1255,88 1280,75 1300,67 1325,61 1344,68" />
        <T x={333} y={781}>SStoch</T>

        <V x={905} y={498} to={888} color="#909090" />
        <Handle x={905} y={686} color="#1010f0" dot="#ff0" />
        <Handle x={905} y={692} color="#1010f0" />
        {FIFTEEN_VOL_A.map((v, i) => (
          <rect key={i} x={341 + i * 6} y={879 - third(v)} width="1" height={third(v)} />
        ))}
        {FIFTEEN_VOL_B.map((v, i) => (
          <rect key={i} x={809 + i * 6} y={879 - third(v)} width="1" height={third(v)} />
        ))}
        <rect x="904" y="862" width="3" height="17" fill="#00e0e0" />
        <H y={879} color="#808080" />
        <T x={333} y={852}>Vol</T>
        <H y={497} />
        <H y={768} w={2} />
        <H y={839} w={2} />
        <V x={331} y={497} to={889} />
        <Ticks x={332} dir={1} from={499} to={768} step={7} />
        <Ticks x={332} dir={1} from={772} to={888} step={5} />

        <H y={888} />
        <H y={889} w={3} x={488} to={897} />
        <H y={889} w={3} x={1057} to={1100} />
        {hours.map(([label, x]) => (
          <React.Fragment key={label}>
            <V x={x} y={893} to={907} />
            <T x={x + 3} y={903}>{label}</T>
          </React.Fragment>
        ))}
        <TimeTag x={847} y={892} w={114} tag="gray">11-13-07 14:45</TimeTag>
      </Plot>
      <Axis x={1108} {...box}>
        <V x={1107} y={497} to={889} />
        <Ticks x={1107} from={499} to={768} step={7} />
        <Ticks x={1107} from={772} to={888} step={5} />
        <AxisLabels
          x={1108}
          items={[
            ["147500", 536], ["147000", 572], ["147114", 552, "pink"], ["146879", 569, "blue"], ["146500", 606], ["146000", 641],
            ["145500", 676], ["145000", 711], ["144500", 745], ["100", 780], ["90.8", 774, "red"], ["50", 807], ["0", 834],
            ["150000", 856], ["75242", 858, "black"], ["1488", 871, "gray"],
          ]}
        />
        <RedArrow x={1151} y={889} />
      </Axis>
    </ChartWindow>
  );
}

function App() {
  return (
    <main className="flex h-screen overflow-hidden bg-[#808080]">
      <div className="flex w-[326px] shrink-0 flex-col">
        <DailyChart />
        <OneMinuteChart />
      </div>
      <div className="flex min-w-0 grow flex-col">
        <FiveMinuteChart />
        <FifteenMinuteChart />
      </div>
      {/* edge of the ruler on the desktop behind the windows */}
      <svg className="h-full w-1 shrink-0" shapeRendering="crispEdges">
        <path d="M1 30v6M1 62v6M1 94v6M1 158v6M1 190v6M1 222v6M1 286v6M1 318v6M1 350v6M1 414v6M1 446v6M1 478v6M1 542v6M1 574v6M1 606v6M1 670v6M1 702v6M1 734v6M1 798v6M1 830v6M1 862v6" stroke="#fff" />
        <path d="M1 33h2M1 65h2M1 97h2M1 161h2M1 193h2M1 225h2M1 289h2M1 321h2M1 353h2M1 417h2M1 449h2M1 481h2M1 545h2M1 577h2M1 609h2M1 673h2M1 705h2M1 737h2M1 801h2M1 833h2M1 865h2" stroke="#fff" />
      </svg>
    </main>
  );
}

export default App;
